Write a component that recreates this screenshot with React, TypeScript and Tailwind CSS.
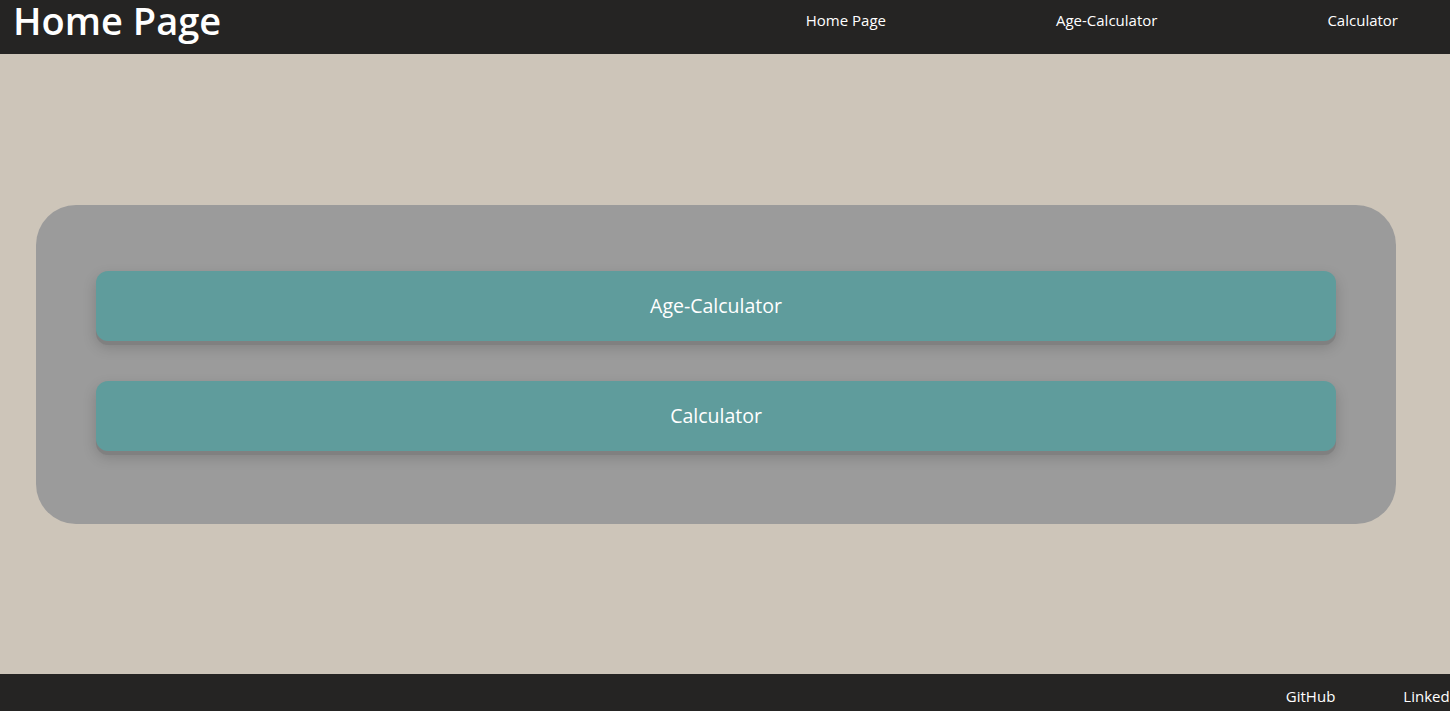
import React from "react";

export default function App() {
  const font = { fontFamily: '"Segoe UI", "Open Sans", "Noto Sans", sans-serif' };
  return (
    <div className="flex h-[711px] w-full flex-col overflow-hidden bg-[#cdc5b9] text-white" style={font}>
      <header className="flex h-[54px] shrink-0 items-start bg-[#252423] pl-[13px] pr-[52px]">
        <h1 className="text-[38px] leading-[40px] font-semibold">Home Page</h1>
        <nav className="ml-auto flex gap-[170px] pt-[9px] text-[15px] leading-[22px]">
          <a>Home Page</a>
          <a>Age-Calculator</a>
          <a>Calculator</a>
        </nav>
      </header>
      <main className="flex flex-1 items-center justify-center pl-[36px] pr-[54px]">
        <div className="flex w-full flex-col gap-[40px] rounded-[40px] bg-[#9b9b9b] px-[60px] pt-[66px] pb-[73px]">
          {["Age-Calculator", "Calculator"].map((t) => (
            <button
              key={t}
              className="flex h-[70px] w-full items-center justify-center rounded-[12px] bg-[#5f9c9c] text-[19.5px] text-white shadow-[0_4px_0_#808080,0_6px_14px_rgba(0,0,0,0.18)]"
            >
              {t}
            </button>
          ))}
        </div>
      </main>
      <footer className="flex h-[37px] shrink-0 items-start justify-end overflow-hidden bg-[#252423] pt-[11px] text-[15px] leading-[22px]">
        <div className="-mr-[13px] flex shrink-0 gap-[68px] whitespace-nowrap">
          <a>GitHub</a>
          <a>LinkedIn</a>
        </div>
      </footer>
    </div>
  );
}
